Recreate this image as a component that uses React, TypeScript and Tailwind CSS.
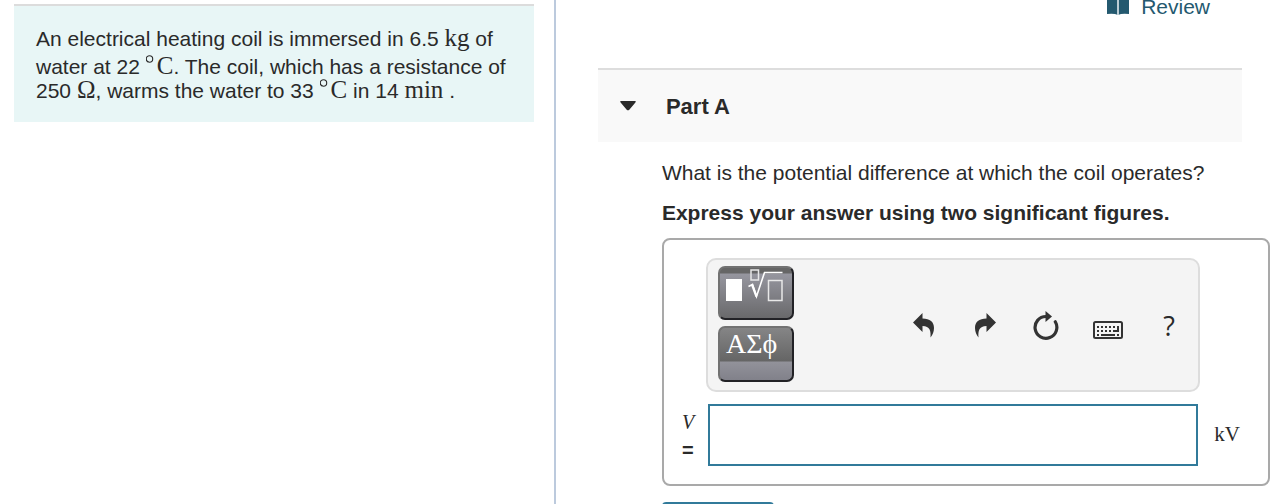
import type { ReactNode } from "react";

function MathText({ children }: { children: ReactNode }) {
  return (
    <span className="font-['Liberation_Serif','DejaVu_Serif',serif] text-[25px]">{children}</span>
  );
}

function Celsius() {
  return (
    <MathText>
      <svg viewBox="0 0 11 20" className="inline h-5 w-[11px] align-baseline" aria-label="degrees">
        <circle cx="3.500" cy="5" r="3.200" fill="none" stroke="currentColor" strokeWidth="1.1" />
      </svg>
      C
    </MathText>
  );
}

function Problem() {
  return (
    <aside className="w-[43.5%] shrink-0 border-r-2 border-[#bccadd] pt-1 pr-5 pl-3.5">
      <p className="border-t-2 border-[#dcdcdc] bg-[#e8f6f6] pt-[18px] pb-[22px] pl-[22px] text-[21px] whitespace-nowrap">
        <span className="block h-7 leading-7">
          An electrical heating coil is immersed in 6.5 <MathText>kg</MathText> of
        </span>
        <span className="block h-6 leading-7">
          water at 22 <Celsius />. The coil, which has a resistance of
        </span>
        <span className="block h-6 leading-7">
          250 <MathText>Ω</MathText>, warms the water to 33 <Celsius /> in 14{" "}
          <MathText>min</MathText> .
        </span>
      </p>
    </aside>
  );
}

const keyClass =
  "block w-19 rounded-[7px] border-2 border-t-[#727272] border-r-[#222226] border-b-[#222226] border-l-[#727272]";

function Toolbar() {
  return (
    <div className="flex items-center rounded-[10px] border-2 border-[#dddddd] bg-[#f4f4f4] pt-1.5 pr-[23px] pb-2 pl-2.5">
      <div className="flex flex-col gap-1.5">
        <button
          type="button"
          aria-label="Templates"
          className={`${keyClass} h-[54px] bg-[linear-gradient(#666666_0px,#666666_5px,#96969f_6px,#69696b_100%)]`}
        >
          <svg viewBox="0 0 72 50" className="h-[50px] w-[72px]" fill="none" stroke="#fff">
            <rect x="6" y="11" width="16" height="22" fill="#fff" stroke="none" />
            <rect x="31" y="2" width="7.500" height="10" stroke="#e8e8e8" strokeWidth="1.500" />
            <path d="M28.500 18.500l4-2 4 12L44.500 4.500H62.500" strokeWidth="1.600" />
            <path d="M32 16.500l4.500 12" strokeWidth="2.200" />
            <rect x="48.500" y="12.500" width="13.500" height="20" stroke="#e8e8e8" strokeWidth="1.500" />
          </svg>
        </button>
        <button
          type="button"
          className={`${keyClass} h-14 bg-[linear-gradient(#858586_0px,#656565_33px,#92929a_34px,#81818a_100%)] pb-5 pl-1.5 text-left font-['Liberation_Serif',serif] text-[28px] leading-8 text-white`}
        >
          ΑΣϕ
        </button>
      </div>
      <div className="mt-1 ml-auto flex items-center text-[#333333]">
        <button type="button" aria-label="Undo" className="mr-10">
          <svg viewBox="0 0 22 26" className="h-[26px] w-[22px]" fill="currentColor">
            <path d="M0 9.500L9.500 0v5.500C17 5.500 21 9 21 15c0 4-1.500 7-3.500 9.500C18 18 17 13 9.500 13v6z" />
          </svg>
        </button>
        <button type="button" aria-label="Redo" className="mr-9">
          <svg viewBox="0 0 22 26" className="h-[26px] w-[22px]" fill="currentColor">
            <path d="M21 9.500L11.500 0v5.500C4 5.500 0 9 0 15c0 4 1.500 7 3.500 9.500C3 18 4 13 11.500 13v6z" />
          </svg>
        </button>
        <button type="button" aria-label="Reset" className="mr-8">
          <svg viewBox="0 0 28 30" className="h-[30px] w-7">
            <path d="M13 5.500A10.900 10.900 0 1 0 22.300 10.800" fill="none" stroke="currentColor" strokeWidth="3.200" strokeLinecap="round" />
            <path d="M12.500 0L19 5.500 12.500 11z" fill="currentColor" />
          </svg>
        </button>
        <button type="button" aria-label="Keyboard shortcuts" className="mt-2 mr-10">
          <svg viewBox="0 0 30 20" className="h-5 w-[30px]" fill="none" stroke="currentColor">
            <rect x="1" y="2" width="28" height="16" rx="1.500" strokeWidth="2" />
            <path d="M4 7h20M4 11h18" strokeWidth="2" strokeDasharray="2 2" />
            <path d="M25 6v5h-3" strokeWidth="2" />
            <path d="M4 15h2M8 15h14M24 15h2" strokeWidth="2" />
          </svg>
        </button>
        <button type="button" aria-label="Help" className="text-[27px] leading-8 font-['Open_Sans','Noto_Sans',sans-serif] text-[#2a2a2a]">
          ?
        </button>
      </div>
    </div>
  );
}

function AnswerBox() {
  return (
    <div className="mt-[9px] rounded-lg border-2 border-[#a9a9a9] pt-[18px] pr-7 pb-[18px] pl-[18px]">
      <div className="mr-10 ml-6">
        <Toolbar />
      </div>
      <div className="mt-3 flex items-center">
        <label htmlFor="answer" className="w-[26px] shrink-0 pt-0.5 text-[20px] leading-7">
          <span className="block font-['Liberation_Serif',serif] italic">V</span>
          <span className="block font-bold">=</span>
        </label>
        <input
          id="answer"
          type="text"
          className="h-[62px] min-w-0 flex-1 border-2 border-[#317a9a] bg-white px-3 text-[21px] outline-none"
        />
        <span className="ml-4 font-['Liberation_Serif',serif] text-[21px]">kV</span>
      </div>
    </div>
  );
}

export default function App() {
  return (
    <div className="flex h-screen overflow-hidden bg-white font-['Liberation_Sans',Arial,sans-serif] text-[#2a2a2a]">
      <Problem />
      <main className="min-w-0 flex-1 pr-2 pl-[42px]">
        <div className="-mt-[7px] mr-15 flex justify-end">
          <a href="#review" className="flex items-center gap-3 text-[21px] leading-7 text-[#24596f]">
            <svg viewBox="0 0 22 20" className="-mt-1 h-5 w-[22px]">
              <path d="M0 0h22v19q-7-1-11 1-4-2-11-1z" fill="currentColor" />
              <path d="M11 0v20" stroke="#bccdd5" strokeWidth="2" />
            </svg>
            Review
          </a>
        </div>
        <section>
          <h2 className="mt-[47px] mr-7 flex h-[74px] items-center border-t-2 border-[#dddddd] bg-[#f9f9f9] pl-[22px] text-[22px] font-bold">
            <button type="button" aria-label="Collapse Part A" className="mr-[30px]">
              <svg viewBox="0 0 16 10" className="h-[10px] w-4" fill="currentColor">
                <path d="M1 0h14q1.500.2.400 1.400L9.300 8.700q-1.300 1.200-2.600 0L.6 1.400Q-.5.2 1 0z" />
              </svg>
            </button>
            Part A
          </h2>
          <div className="pt-[15px] pl-16">
            <p className="text-[21px] leading-8">
              What is the potential difference at which the coil operates?
            </p>
            <p className="mt-2 text-[21px] leading-8 font-bold">
              Express your answer using two significant figures.
            </p>
            <AnswerBox />
            <button
              type="button"
              aria-label="Submit"
              className="mt-4 block h-12 w-28 rounded-sm bg-[#317a9a]"
            />
          </div>
        </section>
      </main>
    </div>
  );
}
